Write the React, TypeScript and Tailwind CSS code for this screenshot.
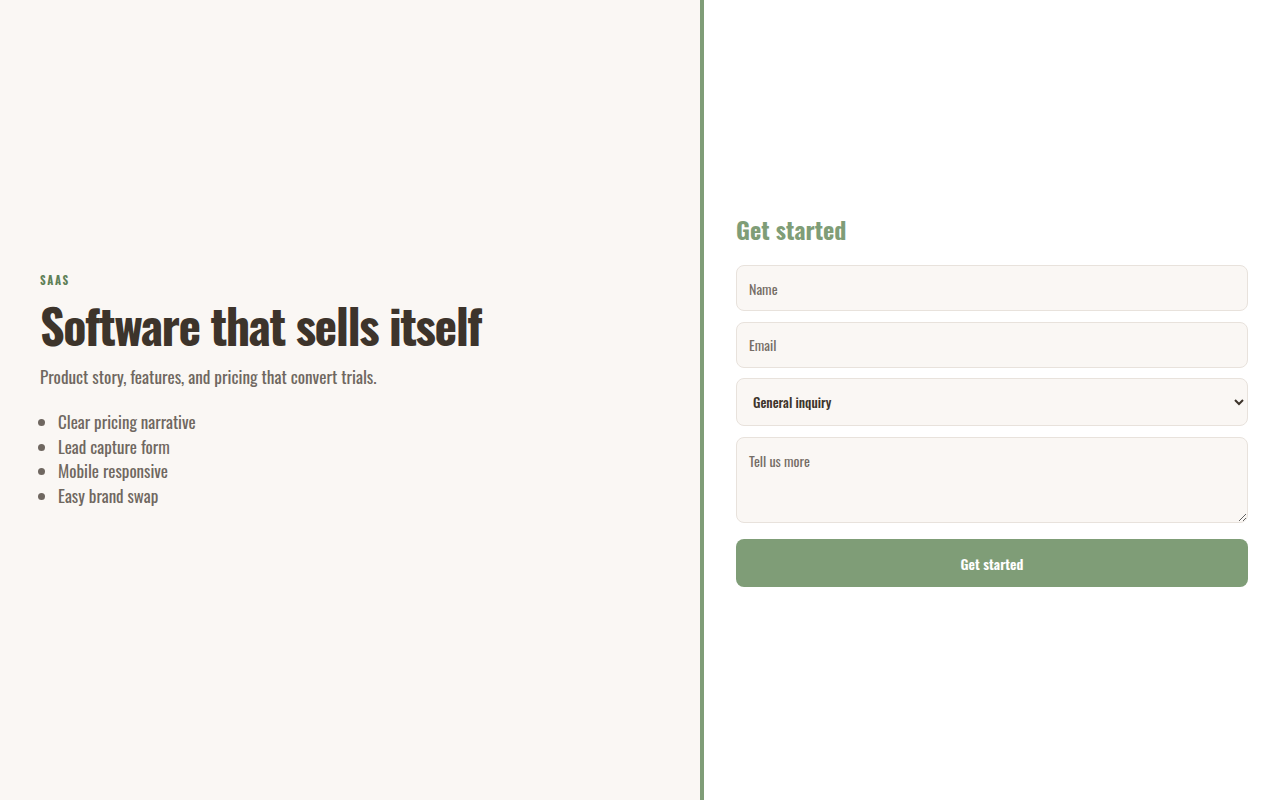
import React from 'react';

const font = { fontFamily: "Oswald, 'Liberation Sans Narrow', 'DejaVu Sans Condensed', sans-serif" };

const features = ['Clear pricing narrative', 'Lead capture form', 'Mobile responsive', 'Easy brand swap'];

const inputCls =
  'w-full h-[46px] rounded-lg border border-[#e8e2dc] bg-[#faf7f4] px-3 text-[14px] text-[#3d342b] placeholder:text-[#756d66] outline-none';

const App: React.FC = () => {
  return (
    <div style={font} className="flex h-[800px] w-full bg-white text-[#3d342b]">
      {/* story column */}
      <section className="flex w-[704px] flex-col justify-center border-r-4 border-[#7f9d77] bg-[#faf7f4] px-10 pb-[19px]">
        <p className="text-[11px] font-bold uppercase tracking-[0.15em] text-[#5f8057]">SaaS</p>
        <h1 className="mt-2 text-[48px] font-bold leading-[1.15] tracking-[-0.03em] text-[#3d342b]">
          Software that sells itself
        </h1>
        <p className="mt-3 text-[17.2px] text-[#6f6760]">Product story, features, and pricing that convert trials.</p>
        <ul className="mt-5 list-disc pl-[18px] text-[17px] leading-[24.7px] text-[#6f6760] marker:text-[#6f6760]">
          {features.map((f) => (
            <li key={f}>{f}</li>
          ))}
        </ul>
      </section>

      {/* lead form */}
      <section className="flex flex-1 flex-col justify-center px-8">
        <h2 className="text-[24px] font-bold leading-8 text-[#7f9d77]">Get started</h2>
        <form className="mt-5 flex flex-col gap-[10.5px]" onSubmit={(e) => e.preventDefault()}>
          <input className={inputCls} placeholder="Name" />
          <input className={inputCls} placeholder="Email" />
          <select className="h-12 w-full rounded-lg border border-[#e8e2dc] bg-[#faf7f4] px-3 text-[13.3px] font-medium text-[#3d342b] outline-none">
            <option>General inquiry</option>
            <option>Pricing</option>
            <option>Demo</option>
          </select>
          <textarea
            className="h-[86px] w-full rounded-lg border border-[#e8e2dc] bg-[#faf7f4] px-3 py-3 text-[14px] text-[#3d342b] placeholder:text-[#756d66] outline-none"
            placeholder="Tell us more"
          />
          <button
            type="submit"
            className="mt-[6px] h-12 w-full rounded-lg bg-[#7f9d77] text-[14px] font-semibold text-white"
          >
            Get started
          </button>
        </form>
      </section>
    </div>
  );
};

export default App;
